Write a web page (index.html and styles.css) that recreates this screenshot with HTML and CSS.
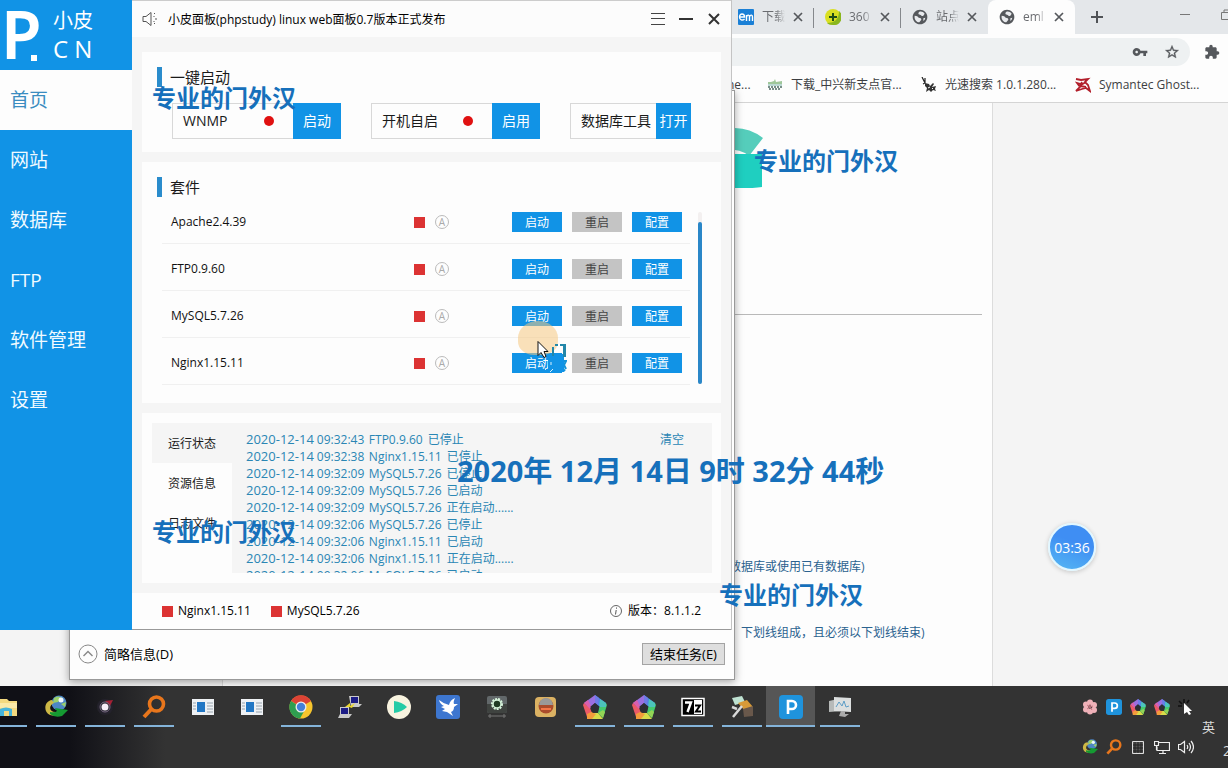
FILE: index.html
```html
<!DOCTYPE html>
<html lang="zh-CN">
<head>
<meta charset="utf-8">
<title>小皮面板</title>
<link rel="stylesheet" href="styles.css">
</head>
<body>
<svg class="defs" aria-hidden="true">
  <symbol id="globe" viewBox="0 0 24 24"><path fill="#55585c" d="M12 1C5.900 1 1 5.900 1 12s4.900 11 11 11 11-4.900 11-11S18.100 1 12 1z"/><path fill="#e8eaed" d="M4 10c3 0 5 1 6 3 3 0 4 1 4 3-1 1-2 3-3 4-4 0-8-4-7-10zM11 4c3-1 6 0 8 3l-2 3c-2 1-3 0-4-1l-3-1c-1-1 0-3 1-4zM17 14l3-1-1 3-2 2z"/></symbol>
  <symbol id="cross" viewBox="0 0 12 12"><path d="M2 2l8 8M10 2l-8 8" stroke="#55585c" stroke-width="1.700"/></symbol>
  <symbol id="penta" viewBox="0 0 24 24">
    <path fill="#9a6fe0" d="M12 0L1 8l6 5 5-5z"/><path fill="#4c87e6" d="M12 0l11 8-6 5-5-5z"/><path fill="#6f7be6" d="M12 0l4 3-1 7-3-2z"/>
    <path fill="#46c96e" d="M23 8l1 2-4 13-5-5 1-6z"/><path fill="#4cc3bb" d="M17 4l6 4 0 4-7 0z"/>
    <path fill="#d8dd4a" d="M20 24H9l-1-6 7 0z"/><path fill="#93d455" d="M20 23l-5-5 5-3 2 2z"/>
    <path fill="#ec5a66" d="M1 8L0 10l4 12 5-4-2-5z"/><path fill="#f39b3c" d="M4 24l0-5 4-2 5 2-4 5z"/><path fill="#d95fae" d="M1 8l4-3 3 6-1 3z"/>
    <path fill="#2d2d33" d="M12 8l4.500 3.500-1.500 5H9l-1.500-5z"/>
  </symbol>
  <symbol id="finder" viewBox="0 0 24 24"><circle cx="14.500" cy="9" r="7" fill="none" stroke="#e8761c" stroke-width="3.600"/><path d="M9.500 14L2 22" stroke="#e8761c" stroke-width="4"/></symbol>
  <symbol id="idm" viewBox="0 0 24 24"><circle cx="15" cy="8" r="7.500" fill="#4d86c4"/><path d="M10 3q4-3 8 0l-4 4-5 1zM17 9l5-2-1 5z" fill="#9bd06a"/><circle cx="17" cy="5" r="2.500" fill="#eff8fc"/><path d="M8 5C0 6-1 17 6 20c3 1 6 1 8 0l-1-3C5 18 4 11 10 8z" fill="#cdb845"/><path d="M6 17q5 1 7-1l-2-3 13 2-6 6q-7 2-12-2z" fill="#159a32"/></symbol>
  <symbol id="window" viewBox="0 0 22 18"><path fill="#eef1f4" d="M0 1h22v16H0z"/><path fill="#2277c4" d="M5 4h8v10H5z"/><path d="M1 5h3M1 8h3M1 11h3M15 5h6M15 8h6M15 11h6M15 14h6" stroke="#98a4ae"/></symbol>
  <symbol id="pbadge" viewBox="0 0 24 24"><rect width="24" height="24" rx="4" fill="#1f93dc"/><path d="M9 19V6h4a4 4 0 010 8H9" fill="none" stroke="#fff" stroke-width="2.600"/></symbol>
  <symbol id="pointer" viewBox="0 0 12 18"><path d="M1 1v14l3-3 3 5 2-1-2-5h4z" fill="#fff" stroke="#111"/></symbol>
</svg>
<div class="desktop">
  <main class="workspace">
    <section class="browser">
      <div class="tabstrip">
        <div class="tab"><svg class="i16" viewBox="0 0 16 16"><rect width="16" height="16" rx="1" fill="#1b80d6"/><path d="M1.500 8h5c0-4-5-4-5 0 0 3 3 4 5 2M8.500 12V6m0 2c1-3 3-2 3 0v4m0-4c1-3 3-2 3 0v4" fill="none" stroke="#fff" stroke-width="1.400"/></svg><span>下载</span><button aria-label="关闭"><svg class="i12"><use href="#cross"/></svg></button></div>
        <div class="tab"><svg class="i16" viewBox="0 0 16 16"><circle cx="8" cy="8" r="8" fill="#d9df22"/><path d="M14 2a8 8 0 01-6 14c-3 0-5-1-6-2 8 0 12-4 12-12z" fill="#8ab61e"/><path d="M8 4v8M4 8h8" stroke="#1f4d18" stroke-width="2"/></svg><span>360</span><button aria-label="关闭"><svg class="i12"><use href="#cross"/></svg></button></div>
        <div class="tab tab-last"><svg class="i16"><use href="#globe"/></svg><span>站点</span><button aria-label="关闭"><svg class="i12"><use href="#cross"/></svg></button></div>
        <div class="tab tab-active"><svg class="i16"><use href="#globe"/></svg><span>eml</span><button aria-label="关闭"><svg class="i12"><use href="#cross"/></svg></button></div>
        <button class="newtab" aria-label="新标签页"><svg class="i14" viewBox="0 0 14 14"><path d="M7 1v12M1 7h12" stroke="#505357" stroke-width="2"/></svg></button>
        <div class="syskeys"><button aria-label="最小化"><svg class="i12" viewBox="0 0 12 12"><path d="M1 5.500h10" stroke="#777"/></svg></button><button aria-label="还原"><svg class="i12" viewBox="0 0 12 12"><path d="M1.500 3.500h7v7h-7zM4 3V1h7v7H9" fill="none" stroke="#777"/></svg></button></div>
      </div>
      <div class="toolbar">
        <div class="omnibox">
          <svg class="i16" viewBox="0 0 24 24"><path fill="#55585c" d="M12.650 10C11.830 7.670 9.610 6 7 6c-3.310 0-6 2.690-6 6s2.690 6 6 6c2.610 0 4.830-1.670 5.650-4H17v4h4v-4h2v-4H12.650zM7 14c-1.100 0-2-.9-2-2s.9-2 2-2 2 .9 2 2-.9 2-2 2z"/></svg>
          <svg class="i16" viewBox="0 0 24 24"><path fill="#55585c" stroke="#55585c" stroke-width=".5" d="M22 9.240l-7.190-.62L12 2 9.190 8.630 2 9.240l5.460 4.730L5.820 21 12 17.270 18.180 21l-1.630-7.030L22 9.240zM12 15.400l-3.760 2.270 1-4.280-3.320-2.880 4.380-.38L12 6.100l1.710 4.040 4.380.38-3.320 2.880 1 4.280L12 15.400z"/></svg>
        </div>
        <svg class="i16" viewBox="0 0 24 24"><path fill="#55585c" d="M20.500 11H19V7c0-1.100-.9-2-2-2h-4V3.500a2.500 2.500 0 0 0-5 0V5H4c-1.100 0-2 .9-2 2v3.800h1.500c1.490 0 2.700 1.210 2.700 2.700s-1.210 2.700-2.700 2.700H2V20c0 1.100.9 2 2 2h3.800v-1.500c0-1.490 1.210-2.700 2.700-2.700s2.700 1.210 2.700 2.700V22H17c1.100 0 2-.9 2-2v-4h1.500a2.500 2.500 0 0 0 0-5z"/></svg>
      </div>
      <nav class="bookmarks">
        <a href="#" class="bm-cut">ne...</a>
        <a href="#"><svg class="i16" viewBox="0 0 16 16"><path d="M1 5h3l3-1 1-2 1 3 6-1v3H1z" fill="#9fc79a"/><path d="M1 10h14M2 12h12" stroke="#4c6a62" stroke-width="1.500" stroke-dasharray="2 1"/><path d="M1 8h14" stroke="#79b3a8"/></svg>下载_中兴新支点官...</a>
        <a href="#"><svg class="i16" viewBox="0 0 16 16"><path d="M1 0l3 6M4 1v5l-2 1" fill="none" stroke="#222" stroke-width="1.200"/><path d="M4 6l4 1 1 2 3-3 1 1-2 3 4-1-1 3 1 2-3-1-2 2-2-2-3 2 1-4-2-2z" fill="#333"/><path d="M7 11l2-1M11 12l1-1" stroke="#fff"/></svg><em>光速搜索 1.0.1.280...</em></a>
        <a href="#"><svg class="i16" viewBox="0 0 16 16"><path d="M1 2l5 1 7-1-3 3 3 3 2 6-4-3-4 1-6 2 4-4-3-4 4 1M7 5l-2 4 6 1M6 8l5-3" fill="none" stroke="#b21f2b" stroke-width="1.800"/></svg><em>Symantec Ghost...</em></a>
      </nav>
      <div class="page">
        <article class="sheet">
          <svg class="brand" viewBox="0 0 40 60"><path d="M0 0h11q15 0 28 10L25 28Q18 21 0 21z" fill="#55cdbb"/><path d="M11 26h27v33q-12 2-38 1V36h11z" fill="#1fcfc0"/></svg>
          <p class="note note-db">数据库或使用已有数据库)</p>
          <p class="note note-prefix">下划线组成，且必须以下划线结束)</p>
        </article>
      </div>
    </section>

    <section class="taskdlg">
      <div class="dlg-body"></div>
      <footer class="dlg-foot">
        <button class="brief"><svg class="i20" viewBox="0 0 20 20"><circle cx="10" cy="10" r="9" fill="none" stroke="#888"/><path d="M5.500 12L10 7.500l4.500 4.500" fill="none" stroke="#888" stroke-width="1.400"/></svg>简略信息(D)</button>
        <button class="endtask">结束任务(E)</button>
      </footer>
    </section>

    <section class="panel">
      <aside class="side">
        <div class="logo"><span class="logo-p">P</span><i></i><span class="logo-t">小皮<b>C N</b></span></div>
        <nav class="menu">
          <a href="#" class="on">首页</a><a href="#">网站</a><a href="#">数据库</a><a href="#">FTP</a><a href="#">软件管理</a><a href="#">设置</a>
        </nav>
      </aside>
      <div class="main">
        <header class="titlebar">
          <svg class="i16" viewBox="0 0 16 16"><path d="M1 5.500h3l5-4v13l-5-4H1z" fill="none" stroke="#555"/><path d="M12 3l1-1M13 8h2M12 12l1 1M12 5v1M12 10v1" stroke="#555"/></svg>
          <h1>小皮面板(phpstudy) linux web面板0.7版本正式发布</h1>
          <button aria-label="菜单"><svg class="i14" viewBox="0 0 14 14"><path d="M0 1.500h14M0 6.500h14M0 12.500h14" stroke="#444"/></svg></button>
          <button aria-label="最小化"><svg class="i14" viewBox="0 0 14 14"><path d="M0 7h14" stroke="#333" stroke-width="2"/></svg></button>
          <button aria-label="关闭"><svg class="i14" viewBox="0 0 14 14"><path d="M2 2l10 10M12 2L2 12" stroke="#333" stroke-width="2"/></svg></button>
        </header>
        <div class="cards">
          <section class="card quick">
            <h2>一键启动</h2>
            <div class="groups">
              <div class="group"><span class="field">WNMP<i class="dot"></i></span><button>启动</button></div>
              <div class="group"><span class="field">开机自启<i class="dot"></i></span><button>启用</button></div>
              <div class="group short"><span class="field">数据库工具</span><button>打开</button></div>
            </div>
          </section>
          <section class="card suite">
            <h2>套件</h2>
            <div class="listwrap">
              <ul class="list">
                <li><span>Apache2.4.39</span><i class="sq"></i><i class="auto">A</i><button>启动</button><button class="gray">重启</button><button>配置</button></li>
                <li><span>FTP0.9.60</span><i class="sq"></i><i class="auto">A</i><button>启动</button><button class="gray">重启</button><button>配置</button></li>
                <li><span>MySQL5.7.26</span><i class="sq"></i><i class="auto">A</i><button>启动</button><button class="gray">重启</button><button>配置</button></li>
                <li><span>Nginx1.15.11</span><i class="sq"></i><i class="auto">A</i><button>启动</button><button class="gray">重启</button><button>配置</button></li>
              </ul>
              <div class="track"><div class="thumb"></div></div>
            </div>
          </section>
          <section class="card status">
            <div class="tabs"><button class="on">运行状态</button><button>资源信息</button><button>日志文件</button></div>
            <div class="log">
              <ul>
                <li><b>2020-12-14</b><time>09:32:43</time><span>FTP0.9.60</span>已停止</li>
                <li><b>2020-12-14</b><time>09:32:38</time><span>Nginx1.15.11</span>已停止</li>
                <li><b>2020-12-14</b><time>09:32:09</time><span>MySQL5.7.26</span>已停止</li>
                <li><b>2020-12-14</b><time>09:32:09</time><span>MySQL5.7.26</span>已启动</li>
                <li><b>2020-12-14</b><time>09:32:09</time><span>MySQL5.7.26</span>正在启动......</li>
                <li><b>2020-12-14</b><time>09:32:06</time><span>MySQL5.7.26</span>已停止</li>
                <li><b>2020-12-14</b><time>09:32:06</time><span>Nginx1.15.11</span>已启动</li>
                <li><b>2020-12-14</b><time>09:32:06</time><span>Nginx1.15.11</span>正在启动......</li>
                <li><b>2020-12-14</b><time>09:32:06</time><span>MySQL5.7.26</span>已启动</li>
              </ul>
              <button class="clear">清空</button>
            </div>
          </section>
        </div>
        <footer class="foot">
          <span class="svc"><i class="sq"></i>Nginx1.15.11</span><span class="svc"><i class="sq"></i>MySQL5.7.26</span>
          <span class="ver"><svg class="i12" viewBox="0 0 12 12"><circle cx="6" cy="6" r="5.500" fill="none" stroke="#666"/><path d="M6.500 2.500v1.200M6.200 5L5.500 9.500" stroke="#555"/></svg>版本：8.1.1.2</span>
        </footer>
      </div>
    </section>

    <div class="halo"></div>
    <svg class="remnant" viewBox="0 0 28 32"><path d="M14 3v11M16 1h3M21 1h5v12" fill="none" stroke="#2387a9" stroke-width="2"/><path d="M24 17h3l-2 4 2 4M23 24l3 3" fill="none" stroke="#1493d8" stroke-width="2"/><path d="M9 10h16v18H9z" fill="#1193e6"/><path d="M14 7v5M25 2v11" stroke="#2387a9" stroke-width="2"/><path d="M3 17l3 3M6 26l3-3M12 18v3M14 25l-3 3" stroke="#d9f0fb" stroke-width="1"/></svg>
    <svg class="cursor"><use href="#pointer"/></svg>
    <div class="wm wm-a">专业的门外汉</div>
    <div class="wm wm-b">专业的门外汉</div>
    <div class="wm wm-c">专业的门外汉</div>
    <div class="wm wm-d">专业的门外汉</div>
    <div class="wm wm-time">2020年 12月 14日 9时 32分 44秒</div>
    <div class="timer">03:36</div>
  </main>

  <footer class="taskbar">
    <div class="apps">
      <button class="app first run" aria-label="文件"><svg width="18" height="24" viewBox="0 0 18 24"><path d="M0 4h7l2 2h8v15H0z" fill="#f3d980"/><path d="M0 8h17v5H0z" fill="#fae9a8"/><path d="M0 14q6-3 12 0v7H9v-5H4v5H0z" fill="#46b4da"/></svg></button>
      <button class="app run" aria-label="下载器"><svg class="i24"><use href="#idm"/></svg></button>
      <button class="app run" aria-label="录像"><svg class="i24" viewBox="0 0 24 24"><circle cx="12" cy="12" r="8" fill="#24222c"/><path d="M12 6l8-1-3 6z" fill="#a52035"/><circle cx="12" cy="12" r="3.500" fill="#f7eef8"/><circle cx="12" cy="12" r="5" fill="none" stroke="#776982"/></svg></button>
      <button class="app run" aria-label="搜索"><svg class="i24"><use href="#finder"/></svg></button>
      <button class="app" aria-label="窗口"><svg width="22" height="18"><use href="#window"/></svg></button>
      <button class="app" aria-label="窗口"><svg width="22" height="18"><use href="#window"/></svg></button>
      <button class="app run" aria-label="浏览器"><svg class="i24" viewBox="0 0 24 24"><circle cx="12" cy="12" r="11.500" fill="#f7c52d"/><path d="M12 12L2 6A11.500 11.500 0 0122 6z" fill="#dd4335"/><path d="M2 6a11.500 11.500 0 009 17.500l5-9-4-2z" fill="#2f9e50"/><circle cx="12" cy="12" r="5.500" fill="#eee"/><circle cx="12" cy="12" r="4.200" fill="#4580d8"/></svg></button>
      <button class="app" aria-label="终端"><svg class="i24" viewBox="0 0 24 24"><path d="M11 1h10v8h3l-3 3h-8zM2 12h9v7h3l-3 4H0l2-4z" fill="#c9c9c9"/><path d="M13 2h7v6h-7zM3 13h7v6H3z" fill="#1c1c86"/><path d="M7 12l5-4v3l5-3-3 5-3-1z" fill="#e9d530"/></svg></button>
      <button class="app" aria-label="播放"><svg class="i24" viewBox="0 0 24 24"><circle cx="12" cy="12" r="12" fill="#f8f3df"/><path d="M7 6q8 1 13 6-5 5-13 6z" fill="#25cba6"/></svg></button>
      <button class="app" aria-label="飞鸟"><svg class="i24" viewBox="0 0 24 24"><rect width="24" height="24" rx="3" fill="#3d76cf"/><path d="M3 5q5 4 10 5 1-5 6-7-2 4-1 6l4 0-4 3q0 4-3 5l2 4-6-4-5-1 3-2-4-2 3-1q-4-2-5-6z" fill="#fff"/></svg></button>
      <button class="app" aria-label="设置工具"><svg class="i24" viewBox="0 0 24 24"><rect x="2" y="1" width="20" height="17" rx="2" fill="#62686a"/><path d="M2 9h20v7q0 2-2 2H4q-2 0-2-2z" fill="#3f4340"/><circle cx="12" cy="9" r="5" fill="none" stroke="#d7f5dc" stroke-width="2" stroke-dasharray="2 1"/><circle cx="12" cy="9" r="4" fill="#203c24" stroke="#d7f5dc" stroke-width="1.500"/><path d="M3 21h18M5 19v4M19 19v4" stroke="#777"/></svg></button>
      <button class="app" aria-label="工具箱"><svg class="i24" viewBox="0 0 24 24"><rect x="1" y="2" width="21" height="20" rx="4" fill="#dbb263"/><circle cx="12" cy="11" r="7.500" fill="#a94c2c"/><path d="M5 10a7 7 0 0114 0z" fill="#9a9a98"/><path d="M7 14h10" stroke="#f47748" stroke-width="2"/></svg></button>
      <button class="app run" aria-label="五边形"><svg class="i24"><use href="#penta"/></svg></button>
      <button class="app run" aria-label="五边形"><svg class="i24"><use href="#penta"/></svg></button>
      <button class="app run" aria-label="7z"><svg class="i24" viewBox="0 0 24 24"><path fill="#000" stroke="#fff" stroke-width="1.500" d="M1 3.500h22v17H1z"/><path fill="#fff" d="M13 5h8v14h-8z"/><path d="M4 7.500h6L6.500 17" fill="none" stroke="#fff" stroke-width="2.400"/><path d="M14 10.500h5l-4 6h5" fill="none" stroke="#000" stroke-width="2"/></svg></button>
      <button class="app run" aria-label="钥匙"><svg class="i24" viewBox="0 0 24 24"><path d="M2 3l10-2 3 6-10 3z" fill="#bfe2d2"/><path d="M8 8l9-3 6 7-7 5z" fill="#d79a38"/><path d="M13 14l10-3v10l-9 1z" fill="#69584b"/><path d="M3 22l9-11M2 12l5 2" stroke="#d9d9d9" stroke-width="2.500"/></svg></button>
      <button class="app run active" aria-label="小皮面板"><svg class="i24"><use href="#pbadge"/></svg></button>
      <button class="app run" aria-label="任务管理器"><svg class="i24" viewBox="0 0 24 24"><path d="M1 6l13-3v13L1 17z" fill="#b7bab9"/><path d="M6 2l17 1v14l-17-1z" fill="#dcdfdf"/><path d="M8 12l3-5 3 4 2-5 2 6 3-1" fill="none" stroke="#5d9dc6"/><path d="M13 16h4v3h4l-4 3-6-1z" fill="#aaa"/></svg></button>
    </div>
    <div class="tray">
      <div class="trayicons">
        <svg class="i16" viewBox="0 0 16 16"><g fill="#efb1b8"><circle cx="8" cy="3.500" r="3"/><circle cx="12" cy="6" r="3"/><circle cx="12" cy="11" r="3"/><circle cx="8" cy="12.500" r="3"/><circle cx="4" cy="10.500" r="3"/><circle cx="4" cy="5.500" r="3"/></g><path d="M8 8V5M8 8l3-1M8 8l2 3M8 8l-3 2M8 8L5 6" stroke="#c4747f"/></svg>
        <svg class="i16"><use href="#pbadge"/></svg><svg class="i16"><use href="#penta"/></svg><svg class="i16"><use href="#penta"/></svg>
        <svg class="i16" viewBox="0 0 16 16"><path d="M1 2l3 3M6 0v4M11 1L9 4M0 7h4" stroke="#111" stroke-width="1.500"/><path d="M6 4v11l3-2 2 3 2-1-2-3h3z" fill="#fff"/></svg>
        <svg class="i16"><use href="#idm"/></svg><svg class="i16"><use href="#finder"/></svg>
        <svg class="i16" viewBox="0 0 16 16"><path d="M2.500 2.500h11v12h-11z" fill="#555" stroke="#ddd"/><path d="M5 3v11M8 3v11M11 3v11M3 6h10M3 9h10M3 12h10" stroke="#222"/></svg>
        <svg class="i16" viewBox="0 0 16 16"><path d="M5 3.500h10.500v8H3v-4M9 12v2.500M5 14.500h7M.500 2.500h4v4h-4zM2.500 6v5" fill="none" stroke="#eee" stroke-width="1.200"/></svg>
        <svg class="i16" viewBox="0 0 16 16"><path d="M.500 5.500h2l4-3v11l-4-3h-2zM9 6q1.500 2 0 4M11 4q3 4 0 8M13 2q5 6 0 12" fill="none" stroke="#eee" stroke-width="1.200"/></svg>
      </div>
      <span class="ime">英</span>
      <span class="clock">2</span>
    </div>
  </footer>
</div>
</body>
</html>
```
FILE: styles.css
```css
* { box-sizing: border-box; }
body { margin: 0; font: 13px/18px "Open Sans", "Noto Sans CJK SC", sans-serif; color: #1a1a1a; }
h1, h2, p, ul { margin: 0; padding: 0; font-weight: 400; }
ul { list-style: none; }
i, em, b { font-style: normal; font-weight: 400; }
a { color: inherit; text-decoration: none; }
button { font: inherit; color: inherit; border: 0; padding: 0; background: none; }
svg { display: block; flex: none; }
.defs { position: absolute; width: 0; height: 0; }
.i12 { width: 12px; height: 12px; }
.i14 { width: 14px; height: 14px; }
.i16 { width: 16px; height: 16px; }
.i20 { width: 20px; height: 20px; }
.i24 { width: 24px; height: 24px; }

.desktop { display: flex; flex-direction: column; height: 100vh; overflow: hidden; }
.workspace { position: relative; flex: 1; overflow: hidden; background: #f4f4f4; }

/* browser behind the panel */
.browser { position: absolute; inset: 0; display: flex; flex-direction: column; }
.tabstrip { display: flex; height: 34px; padding-left: 727px; background: #e4e7ea; overflow: hidden; color: #6a6c70; }
.tab { display: flex; flex: none; align-items: center; width: 87px; height: 34px; padding-left: 11px; position: relative; }
.tab span { width: 23px; margin: 0 7px 0 8px; overflow: hidden; white-space: nowrap; font-size: 12px; -webkit-mask-image: linear-gradient(90deg, #000 60%, transparent); mask-image: linear-gradient(90deg, #000 60%, transparent); }
.tab::after { content: ""; position: absolute; right: 0; top: 8px; width: 1px; height: 20px; background: #85888c; }
.tab-last::after, .tab-active::after { display: none; }
.tab-active { background: #fdfdfd; border-radius: 8px 8px 0 0; }
.newtab { margin-left: 15px; }
.syskeys { display: flex; gap: 29px; margin-left: auto; margin-right: -4px; flex: none; align-items: center; padding-bottom: 4px; }
.toolbar { display: flex; align-items: center; gap: 14px; height: 36px; padding-right: 8px; background: #fdfdfd; }
.omnibox { flex: 1; display: flex; align-items: center; justify-content: flex-end; gap: 16px; height: 28px; padding-right: 10px; border-radius: 14px; background: #eef1f2; }
.bookmarks { display: flex; align-items: center; height: 33px; padding-left: 727px; background: #fdfdfd; border-bottom: 1px solid #d4d4d4; color: #3c3e42; font-size: 12px; white-space: nowrap; }
.bookmarks a { display: flex; align-items: center; gap: 8px; width: 154px; flex: none; padding-bottom: 2px; }
.bookmarks .bm-cut { width: 40px; }
.page { flex: 1; display: flex; background: #f4f4f4; }
.sheet { width: 771px; margin-left: 222px; padding-top: 25px; background: #fdfdfd; border: solid #dcdcdc; border-width: 0 1px; }
.brand { width: 40px; height: 60px; margin-left: 501px; }
.note { padding-left: 506px; font-size: 12px; color: #2b628f; }
.note-db { margin: 126px 10px 0 0; padding-top: 243px; border-top: 1px solid #b9b9b9; }
.note-prefix { padding-left: 518px; margin-top: 48px; }

/* end-task dialog */
.taskdlg { position: absolute; left: 69px; top: 90px; width: 666px; height: 590px; display: flex; flex-direction: column; background: #fff; border: 1px solid #999; box-shadow: 0 2px 8px rgba(0,0,0,.35); }
.dlg-body { flex: 1; }
.dlg-foot { display: flex; align-items: center; justify-content: space-between; height: 51px; padding: 0 9px 0 8px; background: #fdfdfd; color: #000; }
.brief { display: flex; align-items: center; gap: 6px; }
.endtask { width: 83px; height: 22px; line-height: 20px; background: #dedede; border: 1px solid #a4a4a4; }

/* panel */
.panel { position: absolute; left: 0; top: 0; width: 732px; height: 630px; display: flex; background: #f5f5f5; border-right: 1px solid #c4c4c4; }
.side { width: 132px; background: #1193e6; color: #fff; }
.logo { display: flex; align-items: flex-end; height: 70px; padding-bottom: 9px; }
.logo-p { width: 32px; margin-left: 1px; font-size: 66px; line-height: 70px; height: 63px; font-weight: 600; font-family: "Noto Sans", sans-serif; }
.logo > i { width: 6px; height: 6px; background: #fff; margin-left: -2px; }
.logo-t { margin-left: 16px; font-size: 20px; line-height: 28px; height: 54px; }
.logo-t b { display: block; font-size: 24px; line-height: 28px; white-space: pre; }
.menu { display: flex; flex-direction: column; }
.menu a { height: 60px; padding-left: 10px; font-size: 19px; line-height: 60px; color: #f0faff; }
.menu .on { background: #fdfdfd; color: #3a8cc0; }
.main { flex: 1; display: flex; flex-direction: column; border-top: 1px solid #ccc; border-bottom: 1px solid #999; }
.titlebar { display: flex; align-items: center; gap: 14px; height: 36px; padding: 0 10px; background: #fcfcfc; color: #000; }
.titlebar h1 { flex: 1; margin-left: -4px; font-size: 12px; line-height: 20px; padding-top: 2px; }
.cards { flex: 1; display: flex; flex-direction: column; gap: 10px; padding: 15px 10px 10px; }
.card { background: #fdfdfd; padding: 15px 15px 0; }
.card h2 { height: 20px; padding-left: 8px; border-left: 5px solid #2a8ccc; font-size: 15px; line-height: 21px; }
.quick { height: 100px; }
.groups { display: flex; gap: 30px; margin: 16px 0 0 15px; font-size: 14px; }
.group { display: flex; width: 169px; height: 36px; }
.field { flex: 1; display: flex; align-items: center; justify-content: space-between; padding: 0 19px 0 10px; border: 1px solid #d8d8d8; border-right: 0; white-space: nowrap; }
.dot { width: 10px; height: 10px; border-radius: 50%; background: #e01111; }
.group button { width: 48px; background: #1193e6; color: #fff; }
.short { width: 121px; }
.short .field { padding-right: 0; }
.short button { width: 35px; }
.suite { height: 241px; }
.listwrap { display: flex; margin-left: 5px; }
.list { width: 528px; font-size: 12px; color: #111; }
.list li { display: flex; align-items: center; height: 47px; padding: 4px 8px 0 9px; border-bottom: 1px solid #f0f0f0; }
.list span { flex: 1; }
.sq { width: 11px; height: 11px; flex: none; background: #dc3333; }
.auto { width: 14px; height: 14px; margin: 0 63px 0 10px; border: 1px solid #bbb; border-radius: 50%; font-size: 10px; line-height: 12px; text-align: center; color: #aaa; }
.list button { width: 50px; height: 20px; padding-top: 1px; line-height: 19px; background: #1193e6; color: #fff; }
.list button + button { margin-left: 10px; }
.list .gray { background: #c4c4c4; color: #444; }
.track { width: 4px; height: 172px; margin: 15px 0 0 8px; padding-top: 10px; background: #f3f0f0; border-radius: 2px; }
.thumb { height: 162px; border-radius: 2px; background: #2a87c8; }
.status { flex: 1; display: flex; padding: 10px 9px 10px 10px; }
.tabs { width: 80px; display: flex; flex-direction: column; font-size: 12px; }
.tabs button { height: 40px; padding-top: 2px; }
.tabs .on { background: #f5f5f5; }
.log { flex: 1; display: flex; justify-content: space-between; align-items: flex-start; height: 150px; padding: 8px 28px 0 14px; overflow: hidden; background: #f5f5f5; color: #2a86b4; font-size: 12px; line-height: 17px; }
.log li { display: flex; height: 17px; white-space: nowrap; }
.log b { font-size: 13px; margin-right: 3px; }
.log time { width: 52px; }
.log span { margin-right: 5px; }
.foot { display: flex; align-items: center; gap: 20px; height: 36px; padding: 0 30px; background: #fdfdfd; font-size: 12px; color: #000; }
.svc { display: flex; align-items: center; gap: 5px; }
.ver { display: flex; align-items: center; gap: 6px; margin-left: auto; }

/* overlays */
.halo { position: absolute; left: 518px; top: 321px; width: 40px; height: 34px; border-radius: 50% 50% 40% 40%; background: rgba(245,200,130,.55); }
.cursor { position: absolute; left: 537px; top: 340px; width: 12px; height: 19px; }
.remnant { position: absolute; left: 539px; top: 344px; width: 28px; height: 32px; }
.wm { position: absolute; font-size: 24px; line-height: 36px; font-weight: 700; white-space: nowrap; color: #1670bb; }
.wm-a { left: 152px; top: 80px; }
.wm-b { left: 754px; top: 143px; }
.wm-c { left: 152px; top: 514px; }
.wm-d { left: 719px; top: 577px; }
.wm-time { left: 457px; top: 453px; font-size: 29px; }
.timer { position: absolute; left: 1048px; top: 523px; width: 48px; height: 48px; border: 2px solid #e2f7ff; border-radius: 50%; background: linear-gradient(20deg, #55b7f3, #3f8ef3 60%); box-shadow: 0 1px 5px rgba(0,0,0,.2); color: #fff; font-size: 14px; line-height: 45px; text-align: center; }

/* taskbar */
.taskbar { display: flex; justify-content: space-between; height: 82px; background: linear-gradient(90deg, #101016 0, #101016 70px, #333 165px); color: #ddd; overflow: hidden; }
.apps { display: flex; height: 41px; }
.app { position: relative; display: flex; align-items: center; justify-content: center; width: 49px; height: 41px; }
.app.first { width: 31px; justify-content: flex-start; }
.run::after { content: ""; position: absolute; left: 5px; right: 4px; bottom: 0; height: 2px; background: #84b4da; }
.first.run::after { left: 0; right: 4px; }
.active { background: #565656; }
.active.run::after { left: 0; right: 0; }
.tray { display: flex; align-items: center; margin-right: -3px; }
.trayicons { display: grid; grid-template-columns: repeat(5, 24px); grid-auto-rows: 40px; place-items: center; }
.ime { width: 25px; padding-left: 4px; font-size: 13px; }
.clock { padding-top: 48px; font-size: 14px; }
```
